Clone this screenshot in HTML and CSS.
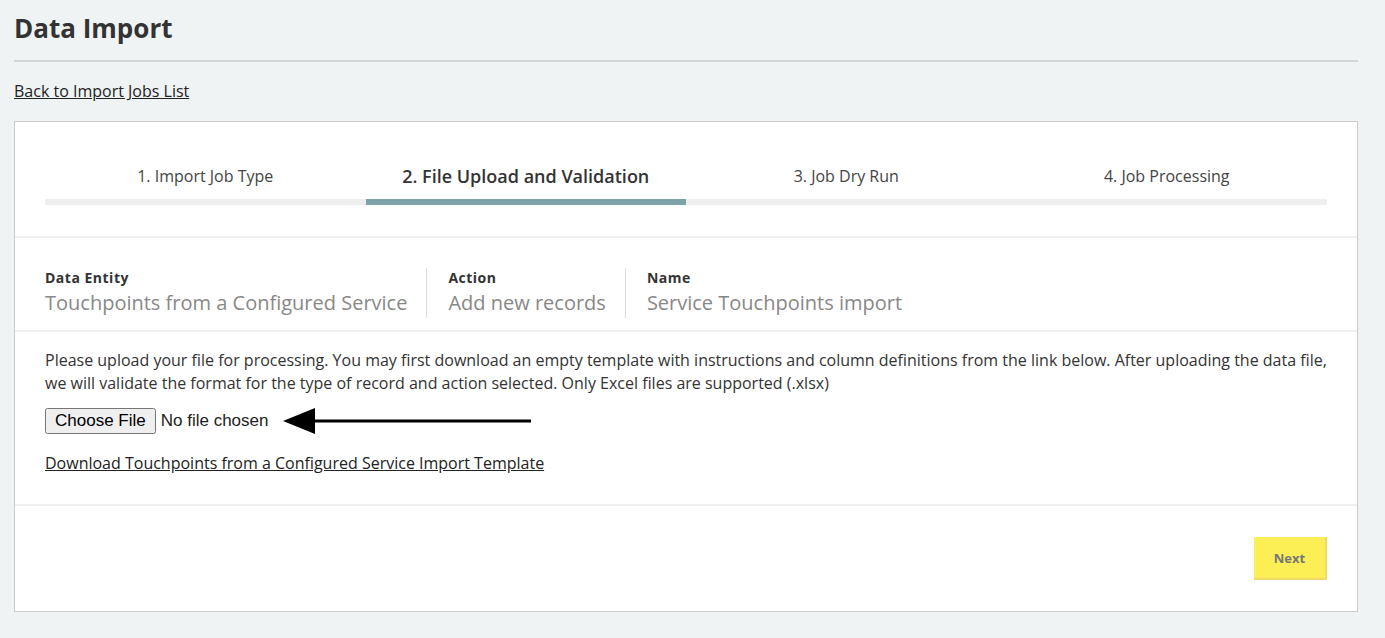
FILE: index.html
```html
<!DOCTYPE html>
<html lang="en">
<head>
  <meta charset="UTF-8" />
  <meta name="viewport" content="width=device-width, initial-scale=1.0"/>
  <title>Data Import</title>
  <link rel="stylesheet" href="styles.css">
</head>
<body>
  <div class="page">
    <h1 class="page-title">Data Import</h1>
    <a class="back-link" href="#">Back to Import Jobs List</a>

    <div class="import-card">
      <div class="steps">
        <div class="step">1. Import Job Type</div>
        <div class="step active">2. File Upload and Validation</div>
        <div class="step">3. Job Dry Run</div>
        <div class="step">4. Job Processing</div>
      </div>

      <div class="summary">
        <div class="summary-item">
          <div class="summary-label">Data Entity</div>
          <div class="summary-value">Touchpoints from a Configured Service</div>
        </div>
        <div class="summary-item">
          <div class="summary-label">Action</div>
          <div class="summary-value">Add new records</div>
        </div>
        <div class="summary-item">
          <div class="summary-label">Name</div>
          <div class="summary-value">Service Touchpoints import</div>
        </div>
      </div>

      <div class="upload">
        <p class="upload-text">Please upload your file for processing. You may first download an empty template with instructions and column definitions from the link below. After uploading the data file, we will validate the format for the type of record and action selected. Only Excel files are supported (.xlsx)</p>
        <div class="upload-row">
          <input type="file" class="file-input" accept=".xlsx">
          <svg class="arrow" width="250" height="28" viewBox="0 0 250 28">
            <polygon points="0,14 32,1 32,27" fill="#000"/>
            <rect x="30" y="12.5" width="218" height="3" fill="#000"/>
          </svg>
        </div>
        <a class="template-link" href="#">Download Touchpoints from a Configured Service Import Template</a>
      </div>

      <div class="card-footer">
        <button class="next-btn">Next</button>
      </div>
    </div>
  </div>
</body>
</html>
```

FILE: styles.css
```css
body {
  margin: 0;
  background: #f0f3f4;
  font-family: 'Open Sans', Lato, sans-serif;
  color: #333;
}
.page {
  width: 1344px;
  margin-left: 14px;
}
.page-title {
  margin: 0;
  padding: 10px 0 14px;
  font-size: 26px;
  line-height: 36px;
  font-weight: 700;
  color: #333;
  border-bottom: 2px solid #d4d6d7;
}
.back-link {
  display: inline-block;
  margin-top: 18px;
  font-size: 16px;
  line-height: 22px;
  color: #222;
  text-decoration: underline;
}
.import-card {
  margin-top: 19px;
  background: #fff;
  border: 1px solid #ccc;
}
.steps {
  display: flex;
  padding: 42px 30px 31px;
  border-bottom: 2px solid #f0f0f0;
}
.step {
  flex: 1;
  text-align: center;
  font-size: 16px;
  color: #444;
  line-height: 24px;
  padding-bottom: 11px;
  border-bottom: 6px solid #eee;
}
.step.active {
  font-size: 18px;
  font-weight: 600;
  color: #333;
  border-bottom-color: #7ba3a8;
}
.summary {
  display: flex;
  padding: 30px 30px 12px;
  border-bottom: 2px solid #f0f0f0;
}
.summary-item {
  padding: 0 19px 0 21px;
  border-left: 1px solid #ddd;
}
.summary-item:first-child {
  padding-left: 0;
  border-left: none;
}
.summary-label {
  font-size: 14px;
  font-weight: 700;
  letter-spacing: 0.5px;
  color: #333;
  line-height: 20px;
}
.summary-value {
  font-size: 20px;
  color: #888;
  line-height: 30px;
}
.upload {
  padding: 17px 26px 30px 30px;
  border-bottom: 2px solid #f0f0f0;
}
.upload-text {
  margin: 0;
  font-size: 16px;
  line-height: 23px;
  color: #333;
}
.upload-row {
  display: flex;
  align-items: center;
  gap: 14px;
  margin-top: 12px;
}
.file-input {
  width: 224px;
  font-family: 'Liberation Sans', Arial, sans-serif;
  font-size: 17px;
  color: #222;
}
.file-input::file-selector-button {
  height: 26px;
  padding: 0 8px;
  margin-right: 5px;
  font-family: inherit;
  font-size: 17px;
}
.template-link {
  display: inline-block;
  margin-top: 17px;
  font-size: 16px;
  color: #222;
}
.card-footer {
  display: flex;
  justify-content: flex-end;
  padding: 31px 30px 31px;
}
.next-btn {
  width: 73px;
  height: 43px;
  background: #fcee55;
  border: none;
  border-right: 2px solid #f2d86a;
  border-bottom: 2px solid #f2d86a;
  font-family: 'Open Sans', sans-serif;
  font-size: 13px;
  font-weight: 700;
  color: #777;
}
```
